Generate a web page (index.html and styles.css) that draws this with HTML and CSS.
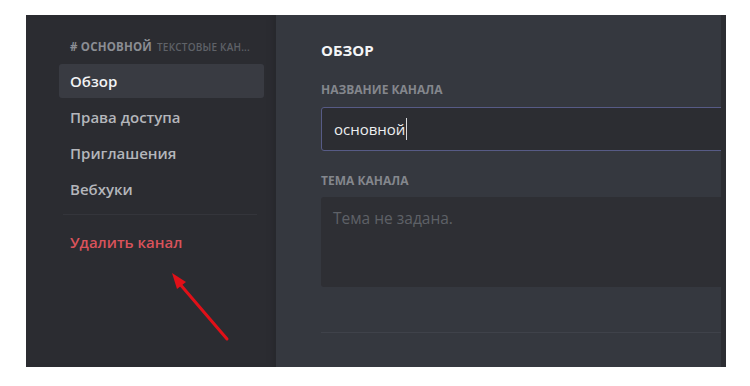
FILE: index.html
```html
<!DOCTYPE html>
<html lang="ru">
<head>
<meta charset="utf-8">
<link rel="stylesheet" href="styles.css">
</head>
<body>
<div class="window">
  <aside class="sidebar">
    <div class="side-header"><span class="chan"># основной</span> <span class="cat">текстовые кан...</span></div>
    <div class="item active">Обзор</div>
    <div class="item">Права доступа</div>
    <div class="item">Приглашения</div>
    <div class="item">Вебхуки</div>
    <div class="sep"></div>
    <div class="item danger">Удалить канал</div>
  </aside>
  <main class="main">
    <div class="content">
      <h2 class="title">Обзор</h2>
      <div class="label">Название канала</div>
      <div class="input"><span class="val">основной</span><span class="caret"></span></div>
      <div class="label label2">Тема канала</div>
      <div class="textarea">Тема не задана.</div>
      <div class="divider"></div>
    </div>
    <div class="strip"></div>
  </main>
  <svg class="arrow" width="80" height="90" viewBox="0 0 80 90">
    <line x1="75" y1="84" x2="27" y2="28" stroke="#e01018" stroke-width="3" stroke-linecap="round"/>
    <polygon points="20,18 34,27 25,34" fill="#e01018"/>
  </svg>
</div>
</body>
</html>
```
FILE: styles.css
```css
html, body {
  margin: 0;
  padding: 0;
  background: #ffffff;
}
body {
  font-family: "Open Sans", "Noto Sans", sans-serif;
  width: 750px;
  height: 386px;
  overflow: hidden;
}
.window {
  position: relative;
  margin: 15px 0 0 26px;
  width: 700px;
  height: 352px;
  display: flex;
  background: #35383f;
}
.sidebar {
  padding: 24px 12px 0 33px;
  box-sizing: content-box;
  width: 205px;
  background: #2b2c31;
  box-shadow: inset -6px 0 6px -4px #26272b;
}
.side-header {
  height: 16px;
  line-height: 16px;
  margin: 0 0 9px 11px;
  font-size: 11.5px;
  text-transform: uppercase;
  white-space: nowrap;
}
.chan {
  font-weight: 700;
  color: #8b8e94;
  letter-spacing: 0.2px;
}
.cat {
  font-size: 10px;
  font-weight: 600;
  color: #5f6268;
  margin-left: 2px;
  letter-spacing: 0.2px;
}
.item {
  height: 34px;
  line-height: 34px;
  padding-left: 11px;
  margin-bottom: 2px;
  border-radius: 3px;
  font-size: 15px;
  font-weight: 600;
  color: #b4b6bb;
}
.item.active {
  background: #393b42;
  color: #f2f3f5;
}
.item.danger {
  color: #d9535b;
}
.sep {
  height: 1px;
  margin: 8px 7px 10px 4px;
  background: #34353b;
}
.main {
  flex: 1;
  display: flex;
  overflow: hidden;
}
.content {
  flex: 1;
  padding: 25px 0 0 45px;
  overflow: hidden;
}
.title {
  margin: 0 0 22px;
  height: 20px;
  line-height: 20px;
  font-size: 15px;
  font-weight: 700;
  color: #f4f5f7;
  text-transform: uppercase;
}
.label {
  height: 16px;
  line-height: 16px;
  font-size: 12px;
  font-weight: 700;
  color: #84878d;
  text-transform: uppercase;
  margin-bottom: 9px;
}
.label2 {
  margin-top: 22px;
  margin-bottom: 8px;
}
.input {
  width: 440px;
  height: 42px;
  border: 1px solid #575b86;
  border-radius: 3px;
  background: #2c2d32;
  display: flex;
  align-items: center;
  padding-left: 12px;
  box-sizing: content-box;
}
.val {
  font-size: 15px;
  font-weight: 500;
  color: #eceef0;
}
.caret {
  width: 1px;
  height: 22px;
  background: #d8d9dc;
  margin-left: 1px;
}
.textarea {
  width: 440px;
  height: 90px;
  box-sizing: border-box;
  padding: 11px 12px;
  line-height: 20px;
  border-radius: 3px;
  background: #2e2f34;
  font-size: 15.5px;
  color: #5e6167;
}
.divider {
  margin-top: 45px;
  height: 1px;
  background: #3f424a;
}
.strip {
  width: 5px;
  background: #2c2d32;
}
.arrow {
  position: absolute;
  left: 126px;
  top: 240px;
}
```
